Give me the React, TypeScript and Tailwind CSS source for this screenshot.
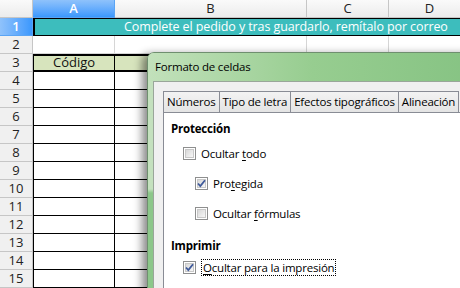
import React from 'react';

const ui = "font-['Open_Sans',sans-serif]";

const rows = Array.from({ length: 15 }, (_, i) => i + 1);

const CheckBox: React.FC<{ checked?: boolean }> = ({ checked }) => (
  <span className="relative inline-flex h-[13px] w-[13px] shrink-0 items-center justify-center border border-[#8e8f8f] bg-white">
    <span className="absolute inset-[1px] border border-[#c8c8c8] bg-gradient-to-br from-[#d8d8d8] to-[#f7f7f7]" />
    {checked && (
      <svg viewBox="0 0 11 11" className="relative h-[11px] w-[11px]">
        <path d="M2 5.5 L4.3 8 L9 2.2" fill="none" stroke="#3f5a9a" strokeWidth="1.8" />
      </svg>
    )}
  </span>
);

const Option: React.FC<{ checked?: boolean; focus?: boolean; indent?: string; children: React.ReactNode }> = ({
  checked,
  focus,
  indent = 'pl-3',
  children,
}) => (
  <div className={`flex items-center gap-[5px] ${indent}`}>
    <CheckBox checked={checked} />
    <span className={`leading-[15px] ${focus ? 'border border-dotted border-black px-[1px]' : ''}`}>{children}</span>
  </div>
);

const Sheet: React.FC = () => {
  const colHead = 'flex items-center justify-center border-r border-b border-[#c6c6c6] bg-gradient-to-b from-[#fafafa] to-[#ececec] text-[13px] text-[#222]';
  const rowHead = 'flex items-center justify-center border-r border-b border-[#c6c6c6] bg-[#f0f0f0] text-[13px] text-[#222]';
  const grayCell = 'border-r border-b border-[#d6d6d6] bg-white';
  return (
    <div className={`grid grid-cols-[33px_82px_192px_82px_82px] auto-rows-[18px] ${ui}`}>
      {/* header row */}
      <div className={colHead} />
      <div className="flex items-center justify-center border-r border-b border-[#5aa4f4] bg-gradient-to-b from-[#8fc2fb] to-[#3a98fd] text-[13px] font-semibold text-white">
        A
      </div>
      <div className={colHead}>B</div>
      <div className={colHead}>C</div>
      <div className={colHead}>D</div>

      {rows.map((r) => (
        <React.Fragment key={r}>
          {r === 1 ? (
            <div className="flex items-center justify-center border-r border-b border-[#5aa4f4] bg-gradient-to-r from-[#8fc2fb] to-[#3a98fd] text-[13px] font-semibold text-white">
              1
            </div>
          ) : (
            <div className={rowHead}>{r}</div>
          )}
          {r === 1 && (
            <div className="col-span-4 flex items-center overflow-hidden whitespace-nowrap border-l-2 border-t border-b border-black bg-[#3dbdbd] pl-[89px] text-[12.5px] tracking-[-0.1px] text-white">
              Complete el pedido y tras guardarlo, remítalo por correo
            </div>
          )}
          {r === 2 && (
            <>
              <div className={grayCell} />
              <div className={grayCell} />
              <div className={grayCell} />
              <div className={grayCell} />
            </>
          )}
          {r === 3 && (
            <>
              <div className="flex items-center justify-center border-t-2 border-b-2 border-r border-l border-black bg-[#d7e4bd] text-[13px] text-[#111]">
                Código
              </div>
              <div className="border-t-2 border-b-2 border-r border-black bg-[#d7e4bd]" />
              <div className={grayCell} />
              <div className={grayCell} />
            </>
          )}
          {r > 3 && (
            <>
              <div className="border-l border-r border-b border-black bg-white" />
              <div className="border-r border-b border-black bg-white" />
              <div className={grayCell} />
              <div className={grayCell} />
            </>
          )}
        </React.Fragment>
      ))}
    </div>
  );
};

const tabs = ['Números', 'Tipo de letra', 'Efectos tipográficos', 'Alineación'];

const Dialog: React.FC = () => (
  <div
    className={`absolute left-[147px] top-[52px] flex h-[260px] w-[330px] flex-col rounded-tl-[7px] border border-[#6f8f6f] bg-[linear-gradient(to_bottom,#c4e1be_0px,#c4e1be_136px,#8cc78a_140px,#8cc78a_100%)] shadow-[-5px_2px_9px_rgba(0,0,0,0.45)] ${ui} tracking-[-0.2px]`}
  >
    {/* title bar */}
    <div className="flex h-[28px] items-center rounded-tl-[6px] bg-gradient-to-r from-[#c2e1bb] via-[#97cd90] to-[#86c383] pl-[7px] text-[11.5px] text-black">
      Formato de celdas
    </div>
    {/* client area */}
    <div className="ml-[5px] flex flex-1 flex-col border-l border-t border-[#9aa69a] bg-[#f0f0f0] pl-[9px] pt-[9px]">
      <div className="flex items-end">
        {tabs.map((t) => (
          <div
            key={t}
            className="-mr-px flex h-[21px] items-center whitespace-nowrap border border-b-0 border-[#898c95] bg-gradient-to-b from-[#f3f3f3] to-[#e4e4e4] px-[3px] text-[11.5px] text-black"
          >
            {t}
          </div>
        ))}
      </div>
      <div className="flex flex-1 flex-col border-l border-t border-[#898c95] bg-white pl-[7px] pt-[7px] text-[11.5px] text-black">
        <div className="font-bold leading-[18px]">Protección</div>
        <div className="mt-[8px] flex flex-col gap-[15px]">
          <Option>
            Ocultar <u className="underline-offset-2">t</u>odo
          </Option>
          <Option indent="pl-[24px]" checked>
            Pro<u className="underline-offset-2">t</u>egida
          </Option>
          <Option indent="pl-[24px]">
            Ocultar <u className="underline-offset-2">f</u>órmulas
          </Option>
        </div>
        <div className="mt-[16px] font-bold leading-[18px]">Imprimir</div>
        <div className="mt-[4px]">
          <Option checked focus>
            <u className="underline-offset-2">O</u>cultar para la impresión
          </Option>
        </div>
      </div>
    </div>
  </div>
);

export default function App() {
  return (
    <div className="relative h-[288px] w-[460px] overflow-hidden bg-white">
      <Sheet />
      <Dialog />
    </div>
  );
}
